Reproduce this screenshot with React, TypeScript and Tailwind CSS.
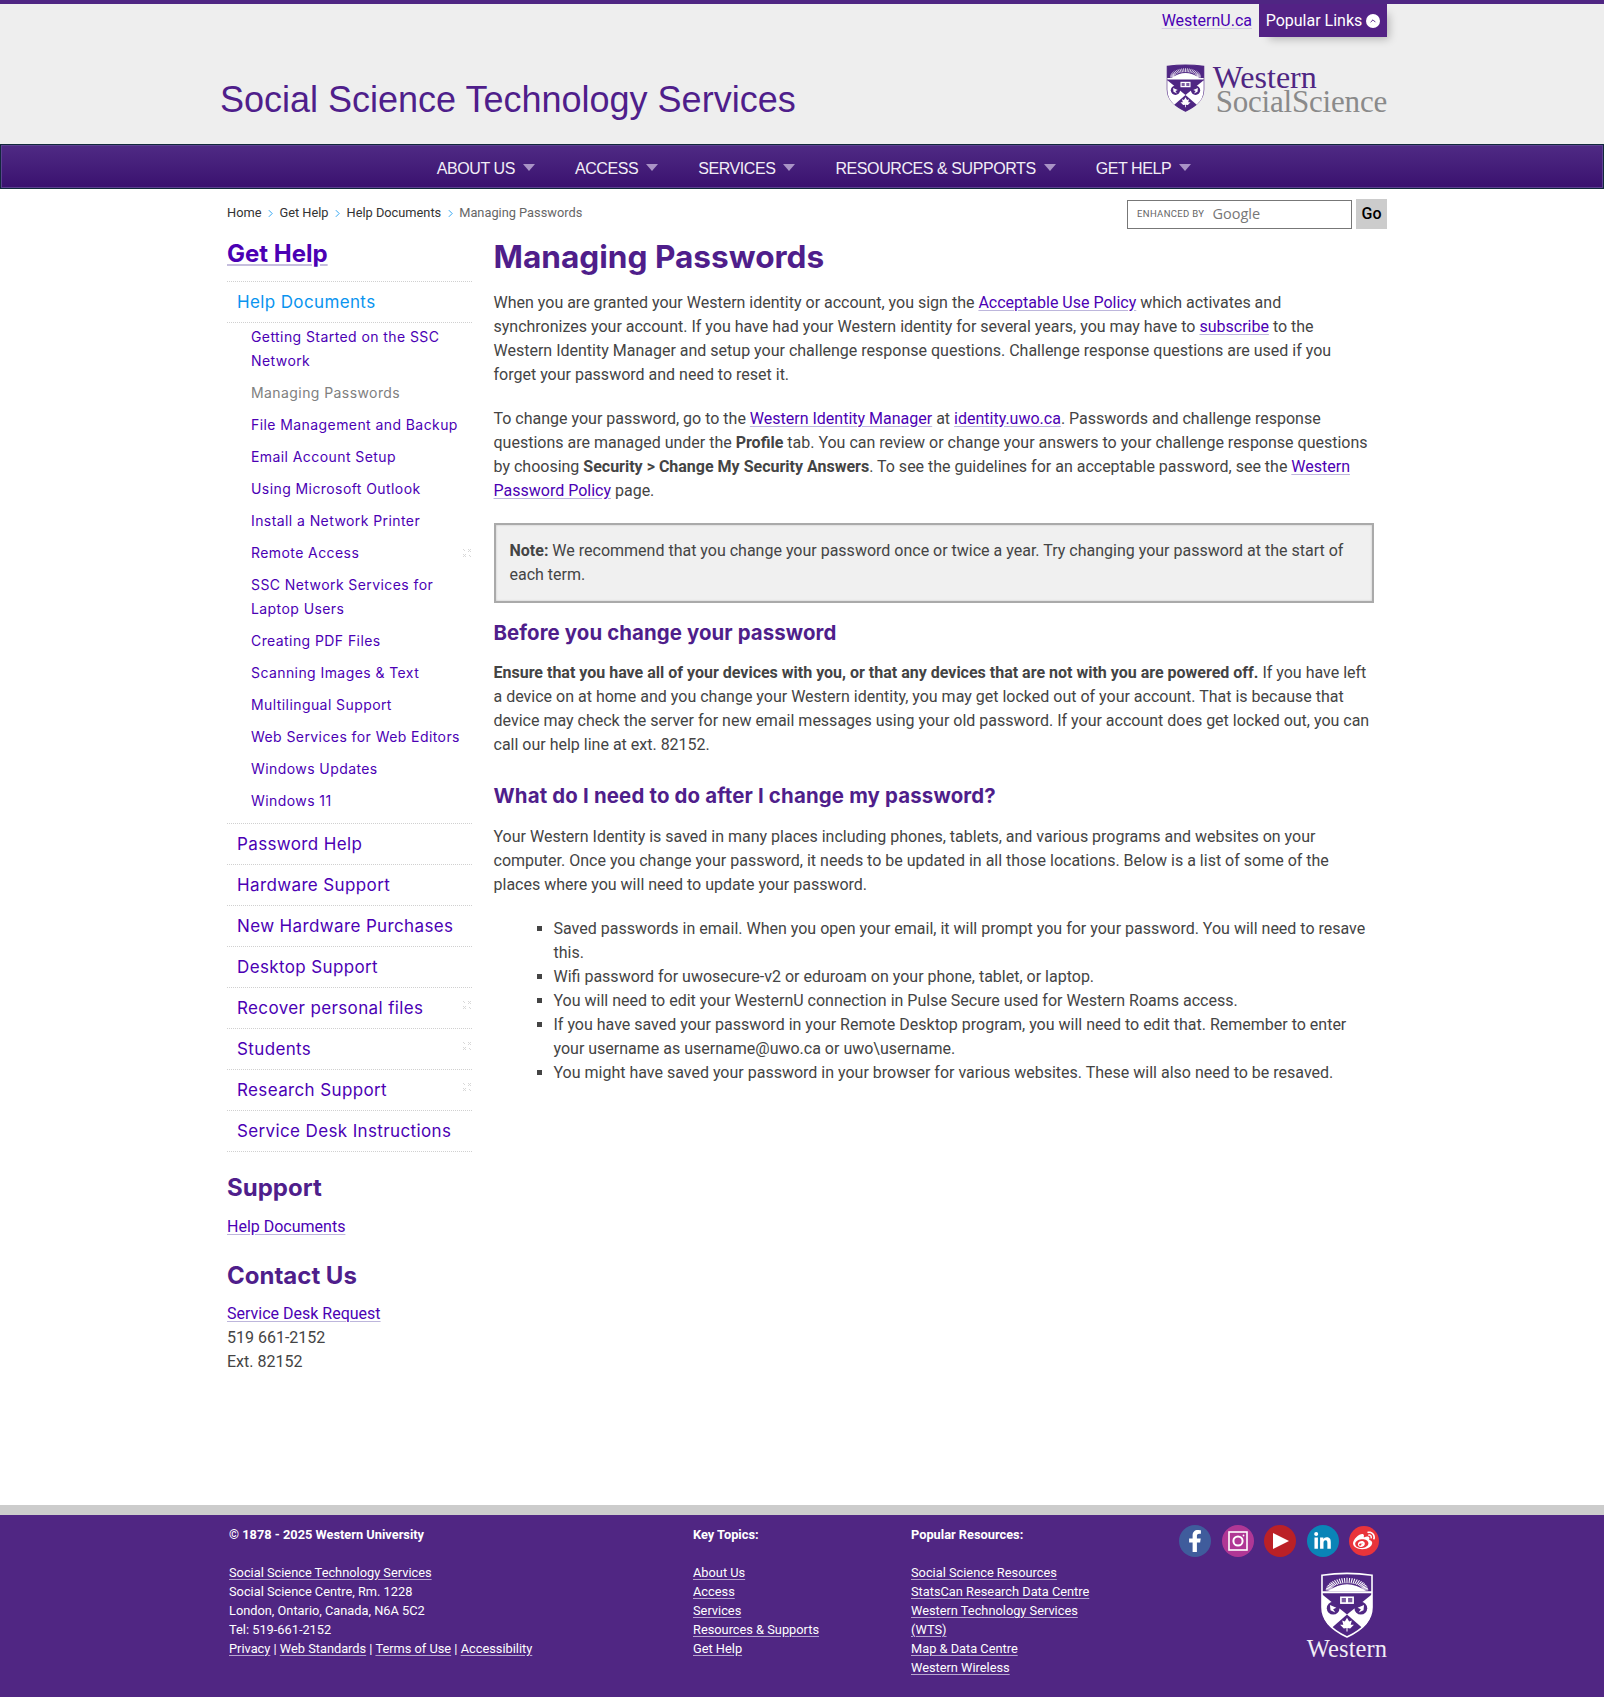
import React from "react";
import { FaFacebookF, FaLinkedinIn, FaWeibo } from "react-icons/fa";

const body = "[font-family:Roboto,sans-serif]";
const inter = "[font-family:Inter,sans-serif]";

function Crest({ outline, className }: { outline: string; className?: string }) {
  const purple = "#4f2683";
  const rays = Array.from({ length: 25 }, (_, i) => {
    const a = Math.PI + (Math.PI * (i + 0.5)) / 25;
    return { x1: 50 + 30 * Math.cos(a), y1: 35 + 14 * Math.sin(a), x2: 50 + 40 * Math.cos(a), y2: 35 + 24 * Math.sin(a) };
  });
  return (
    <svg viewBox="0 0 100 124" className={className}>
      <path d="M3 6 Q50 -1 97 6 V66 Q97 100 50 122 Q3 100 3 66 Z" fill={purple} stroke={outline} strokeWidth="3" />
      {rays.map((r, i) => (
        <line key={i} x1={r.x1} y1={r.y1} x2={r.x2} y2={r.y2} stroke="#fff" strokeWidth="2" />
      ))}
      <path d="M14 36 Q50 10 86 36 Z" fill="#fff" />
      <path d="M3 36 H97 V40 H3 Z" fill="#fff" />
      <path d="M3 42 L50 80 L21 105 Q3 90 3 66 Z" fill="#fff" />
      <path d="M97 42 L50 80 L79 105 Q97 90 97 66 Z" fill="#fff" />
      <rect x="37" y="46" width="26" height="14" fill="#fff" />
      <path d="M40 49 H48 V57 H40 Z M52 49 H60 V57 H52 Z" fill={purple} opacity="0.75" />
      <circle cx="24" cy="68" r="12" fill={purple} />
      <circle cx="76" cy="68" r="12" fill={purple} />
      <path d="M18 62 L30 67 L24 70 L28 76 L19 72 Z" fill="#fff" />
      <path d="M82 62 L70 67 L76 70 L72 76 L81 72 Z" fill="#fff" />
      <path d="M50 86 L54 93 L59 91 L57 99 L63 99 L56 106 L51 105 V112 H49 V105 L44 106 L37 99 L43 99 L41 91 L46 93 Z" fill="#fff" />
    </svg>
  );
}

const Lk = ({ children, className = "" }: { children: React.ReactNode; className?: string }) => (
  <a href="#" className={`text-[#4b00b4] underline decoration-[#bdb6dc] underline-offset-2 ${className}`}>
    {children}
  </a>
);

const NavItem = ({ label }: { label: string }) => (
  <a href="#" className="flex items-center gap-[8px] text-[#f2eef7] text-[16px] tracking-[-0.42px]">
    {label}
    <span className="block w-0 h-0 mb-[3px] border-x-[6px] border-x-transparent border-t-[7px] border-t-[#a993c6]" />
  </a>
);

const Pin = ({ className = "" }: { className?: string }) => (
  <svg viewBox="0 0 10 10" className={`w-[10px] h-[10px] shrink-0 ${className}`} fill="none" stroke="#d8d8d8" strokeWidth="1">
    <path d="M1 9 L4 6 M9 1 L6 4 M6 1 L9 4 M1 6 L4 9 M1 1 L3 3 M9 9 L7 7" />
  </svg>
);

const subItems: [string, boolean?][] = [
  ["Getting Started on the SSC Network"],
  ["Managing Passwords"],
  ["File Management and Backup"],
  ["Email Account Setup"],
  ["Using Microsoft Outlook"],
  ["Install a Network Printer"],
  ["Remote Access", true],
  ["SSC Network Services for Laptop Users"],
  ["Creating PDF Files"],
  ["Scanning Images & Text"],
  ["Multilingual Support"],
  ["Web Services for Web Editors"],
  ["Windows Updates"],
  ["Windows 11"],
];

const mainItems: [string, boolean?][] = [
  ["Password Help"],
  ["Hardware Support"],
  ["New Hardware Purchases"],
  ["Desktop Support"],
  ["Recover personal files", true],
  ["Students", true],
  ["Research Support", true],
  ["Service Desk Instructions"],
];

function Sidebar() {
  return (
    <aside className={`w-[245px] shrink-0 ${inter}`}>
      <h2 className="mt-[8px] h-[30px] leading-[30px] text-[24px] font-bold">
        <a href="#" className="text-[#4b00b4] underline decoration-[#c5bedd] decoration-2 underline-offset-2">Get Help</a>
      </h2>
      <div className="mt-[12px] border-t border-dotted border-[#d0d0d0]">
        <div className="h-[40px] flex items-center pt-[2px] pl-[10px] text-[17px] tracking-[0.37px] text-[#0a94ef]">Help Documents</div>
        <ul className="border-t border-dotted border-[#d0d0d0] pt-[2px] pb-[10px] text-[14px] leading-[24px] tracking-[0.42px]">
          {subItems.map(([t, pin]) => (
            <li key={t} className="pl-[24px] mt-[8px] first:mt-0 flex items-center justify-between">
              <a href="#" className={t === "Managing Passwords" ? "text-[#808080]" : "text-[#4b00b4]"}>{t}</a>
              {pin ? <Pin /> : null}
            </li>
          ))}
        </ul>
      </div>
      <ul className="text-[17px] tracking-[0.37px] text-[#4b00b4]">
        {mainItems.map(([t, pin]) => (
          <li key={t} className="h-[41px] pt-[2px] border-t border-dotted border-[#d0d0d0] pl-[10px] flex items-center justify-between last:h-[42px] last:border-b">
            <a href="#">{t}</a>
            {pin ? <Pin className="mb-[8px]" /> : null}
          </li>
        ))}
      </ul>
      <h2 className="mt-[21px] h-[30px] leading-[30px] text-[24px] font-bold text-[#4f1e8b]">Support</h2>
      <p className={`mt-[12px] text-[16px] leading-[24px] ${body}`}><Lk>Help Documents</Lk></p>
      <h2 className="mt-[22px] h-[30px] leading-[30px] text-[24px] font-bold text-[#4f1e8b]">Contact Us</h2>
      <div className={`mt-[11px] text-[16px] leading-[24px] text-[#444] ${body}`}>
        <p><Lk>Service Desk Request</Lk></p>
        <p>519 661-2152</p>
        <p>Ext. 82152</p>
      </div>
    </aside>
  );
}

function Main() {
  return (
    <main className={`w-[880px] ml-[21.5px] text-[16px] leading-[24px] text-[#444] ${body}`}>
      <h1 className={`mt-[6px] h-[40px] leading-[40px] text-[31.6px] font-bold text-[#4f1e8b] ${inter}`}>Managing Passwords</h1>
      <p className="mt-[14px]">
        When you are granted your Western identity or account, you sign the <Lk>Acceptable Use Policy</Lk> which activates and synchronizes your account. If you have had your Western identity for several years, you may have to <Lk>subscribe</Lk> to the Western Identity Manager and setup your challenge response questions. Challenge response questions are used if you forget your password and need to reset it.
      </p>
      <p className="mt-[20px]">
        To change your password, go to the <Lk>Western Identity Manager</Lk> at <Lk>identity.uwo.ca</Lk>. Passwords and challenge response questions are managed under the <strong>Profile</strong> tab. You can review or change your answers to your challenge response questions by choosing <strong>Security &gt; Change My Security Answers</strong>. To see the guidelines for an acceptable password, see the <Lk>Western Password Policy</Lk> page.
      </p>
      <div className="mt-[20px] h-[80px] border-2 border-[#aaaaaa] bg-[#f0f0f0] px-[14px] py-[14px] shadow-[inset_0_0_2px_#bbb]">
        <strong>Note:</strong> We recommend that you change your password once or twice a year. Try changing your password at the start of each term.
      </div>
      <h3 className={`mt-[16px] h-[28px] leading-[28px] text-[20.4px] tracking-[0.1px] font-bold text-[#4f1e8b] ${inter}`}>Before you change your password</h3>
      <p className="mt-[14px]">
        <strong>Ensure that you have all of your devices with you, or that any devices that are not with you are powered off.</strong> If you have left a device on at home and you change your Western identity, you may get locked out of your account. That is because that device may check the server for new email messages using your old password. If your account does get locked out, you can call our help line at ext. 82152.
      </p>
      <h3 className={`mt-[25px] h-[28px] leading-[28px] text-[20.4px] tracking-[0.17px] font-bold text-[#4f1e8b] ${inter}`}>What do I need to do after I change my password?</h3>
      <p className="mt-[15px]">
        Your Western Identity is saved in many places including phones, tablets, and various programs and websites on your computer. Once you change your password, it needs to be updated in all those locations. Below is a list of some of the places where you will need to update your password.
      </p>
      <ul className="mt-[20px] pl-[60px] list-[square]">
        <li>Saved passwords in email. When you open your email, it will prompt you for your password. You will need to resave this.</li>
        <li>Wifi password for uwosecure-v2 or eduroam on your phone, tablet, or laptop.</li>
        <li>You will need to edit your WesternU connection in Pulse Secure used for Western Roams access.</li>
        <li>If you have saved your password in your Remote Desktop program, you will need to edit that. Remember to enter your username as username@uwo.ca or uwo\username.</li>
        <li>You might have saved your password in your browser for various websites. These will also need to be resaved.</li>
      </ul>
    </main>
  );
}

const FootLink = ({ children }: { children: React.ReactNode }) => (
  <a href="#" className="text-white underline decoration-[#b7a5d0] underline-offset-[2px]">{children}</a>
);

const Social = ({ bg, children, size = "w-[32px] h-[32px]" }: { bg: string; children: React.ReactNode; size?: string }) => (
  <span className={`${size} ${bg} rounded-full flex items-center justify-center text-white`}>{children}</span>
);

function Footer() {
  return (
    <footer className={`bg-[#502683] border-t-[10px] border-[#cccccc] h-[192px] text-[12.8px] leading-[19px] text-white ${body}`}>
      <div className="w-[1160px] ml-[227px] flex pt-[10px] pl-[2px]">
        <div className="w-[464px] shrink-0">
          <p className="font-bold">© 1878 - 2025 Western University</p>
          <p className="mt-[19px]"><FootLink>Social Science Technology Services</FootLink></p>
          <p>Social Science Centre, Rm. 1228</p>
          <p>London, Ontario, Canada, N6A 5C2</p>
          <p>Tel: 519-661-2152</p>
          <p><FootLink>Privacy</FootLink> | <FootLink>Web Standards</FootLink> | <FootLink>Terms of Use</FootLink> | <FootLink>Accessibility</FootLink></p>
        </div>
        <div className="w-[218px] shrink-0">
          <p className="font-bold">Key Topics:</p>
          <ul className="mt-[19px]">
            {["About Us", "Access", "Services", "Resources & Supports", "Get Help"].map((t) => (
              <li key={t}><FootLink>{t}</FootLink></li>
            ))}
          </ul>
        </div>
        <div className="w-[200px] shrink-0">
          <p className="font-bold">Popular Resources:</p>
          <ul className="mt-[19px]">
            {["Social Science Resources", "StatsCan Research Data Centre", "Western Technology Services (WTS)", "Map & Data Centre", "Western Wireless"].map((t) => (
              <li key={t}><FootLink>{t}</FootLink></li>
            ))}
          </ul>
        </div>
        <div className="ml-[66px] w-[210px] shrink-0 flex flex-col items-end">
          <div className="flex w-[200px] mr-[8px] justify-between items-center">
            <Social bg="bg-[#3f5c9c]"><FaFacebookF size={22} /></Social>
            <Social bg="bg-[#b03795]">
              <svg viewBox="0 0 20 20" className="w-[20px] h-[20px]" fill="none" stroke="#fff">
                <rect x="1" y="1" width="18" height="18" strokeWidth="1.6" />
                <circle cx="10" cy="10" r="4.6" strokeWidth="2" />
                <circle cx="15.5" cy="4.5" r="0.9" fill="#fff" stroke="none" />
              </svg>
            </Social>
            <Social bg="bg-[#bb2026]">
              <svg viewBox="0 0 16 16" className="w-[16px] h-[16px] ml-[2px]" fill="#fff"><path d="M0 0 L16 8 L0 16 Z" /></svg>
            </Social>
            <Social bg="bg-[#0a84b7]"><FaLinkedinIn size={19} /></Social>
            <Social bg="bg-[#e9343b]" size="w-[30px] h-[30px]"><FaWeibo size={22} /></Social>
          </div>
          <div className="mt-[15px] w-[80px] flex flex-col items-center">
            <Crest outline="#ffffff" className="w-[54px] h-[66px]" />
            <span className="[font-family:'Liberation_Serif',serif] mt-[1px] text-[24.5px] leading-[20px] tracking-[0.1px] text-[#f1edf6] whitespace-nowrap">Western</span>
          </div>
        </div>
      </div>
    </footer>
  );
}

function Chevron() {
  return (
    <svg viewBox="0 0 6 10" className="w-[5px] h-[9px] mx-[6.5px] mt-[1px]" fill="none" stroke="#0a94ef" strokeWidth="1"><path d="M1 1 L5 5 L1 9" /></svg>
  );
}

export default function App() {
  return (
    <div className={`w-full bg-white ${body}`}>
      <header className="bg-[#eeeeee] border-t-4 border-[#4f2683] h-[144px]">
        <div className="w-[1160px] ml-[227px] h-[140px]">
          <div className="flex justify-end items-start">
            <a href="#" className="mt-[6px] mr-[7px] text-[16px] leading-[22px] text-[#4b00b4] underline decoration-[#d4cde4] underline-offset-2">WesternU.ca</a>
            <div className="h-[33px] w-[128px] bg-[#532285] text-white text-[16px] flex items-center justify-center gap-[4px] shadow-[6px_6px_8px_-4px_rgba(0,0,0,0.25)]">
              Popular Links
              <span className="w-[14px] h-[14px] rounded-full bg-white flex items-center justify-center">
                <svg viewBox="0 0 10 10" className="w-[8px] h-[8px]" fill="none" stroke="#532285" strokeWidth="1.2"><path d="M2 6.5 L5 3.5 L8 6.5" /></svg>
              </span>
            </div>
          </div>
          <div className="flex items-start justify-between">
            <h1 className="mt-[39px] ml-[-7px] text-[36px] leading-[48px] text-[#4f1e8b] [font-family:'Liberation_Sans',sans-serif]">Social Science Technology Services</h1>
            <div className="flex items-start mt-[27px]">
              <Crest outline="#4f2683" className="w-[39px] h-[48px]" />
              <div className="ml-[8px] [font-family:'Liberation_Serif',serif] whitespace-nowrap">
                <div className="text-[32px] leading-[26px] text-[#4f2683]">Western</div>
                <div className="text-[31px] leading-[24px] ml-[3px] text-[#8a8a8a] tracking-[-0.2px]">SocialScience</div>
              </div>
            </div>
          </div>
        </div>
      </header>
      <nav className="h-[45px] border border-[#12283c] bg-gradient-to-b from-[#4f2a84] to-[#3a106f] shadow-[inset_0_0_0_1px_#5c4190] flex items-center justify-center gap-[40px] pt-[4px] [font-family:'Liberation_Sans',sans-serif] pl-[24px]">
        <NavItem label="ABOUT US" />
        <NavItem label="ACCESS" />
        <NavItem label="SERVICES" />
        <NavItem label="RESOURCES & SUPPORTS" />
        <NavItem label="GET HELP" />
      </nav>
      <div className="w-[1160px] ml-[227px] h-[1316px]">
        <div className="flex items-center justify-between h-[42px] pt-[8px]">
          <div className="flex items-center text-[12.8px] text-[#333] mb-[3px]">
            <a href="#">Home</a>
            <Chevron />
            <a href="#">Get Help</a>
            <Chevron />
            <a href="#">Help Documents</a>
            <Chevron />
            <span className="text-[#666]">Managing Passwords</span>
          </div>
          <div className="flex items-center gap-[4px]">
            <div className="w-[225px] h-[29px] border border-[#777] bg-white flex items-center pl-[9px] gap-[8px]">
              <span className="text-[9.5px] tracking-[0.35px] text-[#666]">ENHANCED BY</span>
              <span className="text-[14.5px] text-[#777] [font-family:'Open_Sans',sans-serif]">Google</span>
            </div>
            <button className="w-[31px] h-[30px] bg-[#cccccc] text-black text-[16px] font-medium">Go</button>
          </div>
        </div>
        <div className="flex">
          <Sidebar />
          <Main />
        </div>
      </div>
      <Footer />
    </div>
  );
}
